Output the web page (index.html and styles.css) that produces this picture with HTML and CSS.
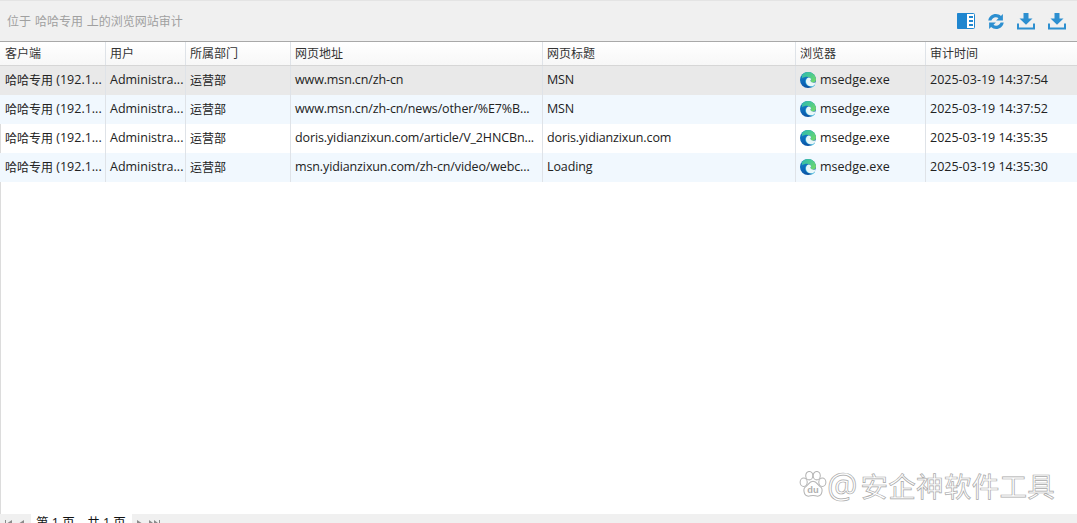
FILE: index.html
```html
<!DOCTYPE html>
<html lang="zh-CN">
<head>
<meta charset="utf-8">
<title>浏览网站审计</title>
<link rel="stylesheet" href="styles.css">
</head>
<body>
<svg class="defs" width="0" height="0" aria-hidden="true">
  <defs>
    <linearGradient id="edgeBlue" x1="0.3" y1="0" x2="0.6" y2="1">
      <stop offset="0" stop-color="#1a86c4"/><stop offset="0.6" stop-color="#0c66b8"/><stop offset="1" stop-color="#0a4f9e"/>
    </linearGradient>
    <linearGradient id="edgeGreen" x1="0" y1="0" x2="1" y2="0.6">
      <stop offset="0" stop-color="#2fb8b0"/><stop offset="0.6" stop-color="#4ccb8e"/><stop offset="1" stop-color="#6cd66e"/>
    </linearGradient>
    <symbol id="edge" viewBox="0 0 16 16">
      <circle cx="8" cy="8" r="8" fill="url(#edgeBlue)"/>
      <path d="M2.300 2.400C3.800.9 5.800 0 8 0c4.400 0 8 3.400 8 7.600 0 1.900-1.500 3.100-3.500 3.100-1.300 0-2.400-.4-2.800-1 .8-.5 1.100-1.200 1.100-2 0-1.700-1.800-3-4-3-1.800 0-3.300.5-4.500 1.500-.4-.9-.4-2.900.0-3.800z" fill="url(#edgeGreen)"/>
      <path d="M6.500 6.600C5 8 4.900 10.300 6 12c1.300 2 3.900 3.100 6.400 2.700-1.100.8-2.700 1.300-4.200 1.300.4 0 5.500 0 7-3.600-1.200 1-2.900 1.300-4.500 1-2.300-.5-4-2-4.200-4.200-.1-1 .1-1.900.5-2.600z" fill="#3db7dc"/>
      <path d="M8.500 5.600c1.500 0 2.500.9 2.500 1.900 0 .6-.3 1-.8 1.300.6 1.300 2.200 2 3.800 1.900 1 0 2-.4 2-.9-.4 2.200-1.700 3.700-3.400 4.400-3.100.5-6.300-1.400-6.600-4.300-.2-1.900.9-4.300 2.500-4.300z" fill="#e9f6f8"/>
    </symbol>
    <symbol id="download" viewBox="0 0 18 18">
      <path d="M6.500 1h5v5.500h4L9 12.700 2.500 6.500h4z" fill="#2d8fd0"/>
      <path d="M1 11.500V16.500H17V11.500" fill="none" stroke="#2d8fd0" stroke-width="2"/>
    </symbol>
  </defs>
</svg>
<div class="app">
  <header class="toolbar">
    <span class="crumb">位于 哈哈专用 上的浏览网站审计</span>
    <div class="tools">
      <svg class="tool" width="18" height="16" viewBox="0 0 18 16" role="img" aria-label="面板">
        <rect x="0.500" y="0.500" width="17" height="15" rx="1" fill="#fff" stroke="#1f86cf"/>
        <rect x="0" y="0" width="10" height="16" rx="1" fill="#1f86cf"/>
        <path d="M12 4h4M12 8h4M12 12h4" stroke="#1f86cf" stroke-width="2"/>
      </svg>
      <svg class="tool" width="16" height="17" viewBox="0 0 16 17" role="img" aria-label="刷新">
        <path d="M.3 7.500C.9 3.500 4.100 1 7.900 1c2 0 3.700.7 5 1.900L14.900.9V7.600H8.100l2.400-2.400c-.7-.6-1.600-.9-2.600-.9-2.200 0-3.900 1.300-4.500 3.200z" fill="#2d8fd0"/>
        <path d="M15.700 9.500C15.100 13.500 11.900 16 8.100 16c-2 0-3.700-.7-5-1.900l-2 2V9.400h6.800l-2.400 2.400c.7.600 1.600.9 2.600.9 2.200 0 3.900-1.300 4.500-3.200z" fill="#2d8fd0"/>
      </svg>
      <svg class="tool" width="18" height="18" role="img" aria-label="下载"><use href="#download"/></svg>
      <svg class="tool" width="18" height="18" role="img" aria-label="导出"><use href="#download"/></svg>
    </div>
  </header>

  <main class="grid">
    <div class="row head">
      <div class="cell">客户端</div><div class="cell">用户</div><div class="cell">所属部门</div><div class="cell">网页地址</div><div class="cell">网页标题</div><div class="cell">浏览器</div><div class="cell">审计时间</div>
    </div>
    <div class="row selected">
      <div class="cell"><span class="zh">哈哈专用</span>&nbsp;(192.1...</div><div class="cell">Administra...</div><div class="cell zh">运营部</div><div class="cell tight">www.msn.cn/zh-cn</div><div class="cell tight">MSN</div>
      <div class="cell"><svg class="edge" width="16" height="16"><use href="#edge"/></svg>msedge.exe</div><div class="cell">2025-03-19 14:37:54</div>
    </div>
    <div class="row alt">
      <div class="cell"><span class="zh">哈哈专用</span>&nbsp;(192.1...</div><div class="cell">Administra...</div><div class="cell zh">运营部</div><div class="cell tight">www.msn.cn/zh-cn/news/other/%E7%B...</div><div class="cell tight">MSN</div>
      <div class="cell"><svg class="edge" width="16" height="16"><use href="#edge"/></svg>msedge.exe</div><div class="cell">2025-03-19 14:37:52</div>
    </div>
    <div class="row">
      <div class="cell"><span class="zh">哈哈专用</span>&nbsp;(192.1...</div><div class="cell">Administra...</div><div class="cell zh">运营部</div><div class="cell tight">doris.yidianzixun.com/article/V_2HNCBn...</div><div class="cell tight">doris.yidianzixun.com</div>
      <div class="cell"><svg class="edge" width="16" height="16"><use href="#edge"/></svg>msedge.exe</div><div class="cell">2025-03-19 14:35:35</div>
    </div>
    <div class="row alt">
      <div class="cell"><span class="zh">哈哈专用</span>&nbsp;(192.1...</div><div class="cell">Administra...</div><div class="cell zh">运营部</div><div class="cell tight">msn.yidianzixun.com/zh-cn/video/webc...</div><div class="cell tight">Loading</div>
      <div class="cell"><svg class="edge" width="16" height="16"><use href="#edge"/></svg>msedge.exe</div><div class="cell">2025-03-19 14:35:30</div>
    </div>
  </main>

  <footer class="pager">
    <div class="nav">
      <svg width="26" height="9" viewBox="0 0 26 9" aria-hidden="true"><path d="M2.500 3v6" stroke="#8a8a8a" stroke-width="1"/><path d="M9 3L4.500 6 9 9z" fill="#8a8a8a"/><path d="M21 3l-4.500 3 4.500 3z" fill="#8a8a8a"/></svg>
    </div>
    <div class="page">第 1 页，共 1 页</div>
    <div class="nav">
      <svg width="28" height="9" viewBox="0 0 28 9" aria-hidden="true"><path d="M2 3l4.500 3L2 9z" fill="#8a8a8a"/><path d="M14 3l4 3-4 3zM19 3l4 3-4 3z" fill="#8a8a8a"/><path d="M24.500 3v6" stroke="#8a8a8a"/></svg>
    </div>
  </footer>
</div>

<div class="watermark">
  <svg width="28" height="28" viewBox="0 0 30 30" aria-hidden="true">
    <g fill="#fff" stroke="#b4b4b4" stroke-width="1.100">
      <ellipse cx="5" cy="12" rx="3.800" ry="4.500"/>
      <ellipse cx="11" cy="5" rx="3.800" ry="4.500"/>
      <ellipse cx="19" cy="5" rx="3.800" ry="4.500"/>
      <ellipse cx="25" cy="12" rx="3.800" ry="4.500"/>
      <path d="M15 11c4 0 5 4 8 6 3 2 2 10-3 10-2 0-3-.7-5-.7s-3 .7-5 .7c-5 0-6-8-3-10 3-2 4-6 8-6z"/>
    </g>
    <text x="15" y="24" class="du">du</text>
  </svg>
  <span class="mark-at">@</span><span class="mark-text">安企神软件工具</span>
</div>
</body>
</html>
```
FILE: styles.css
```css
* { box-sizing: border-box; }
html, body { margin: 0; height: 523px; overflow: hidden; background: #fff; }
body {
  position: relative;
  font-family: "Open Sans", "Noto Sans CJK SC", sans-serif;
  font-size: 12.5px;
  color: #222;
}
.defs { position: absolute; }
.app { display: flex; flex-direction: column; height: 523px; border-left: 1px solid #dcdcdc; }

.toolbar {
  flex: none;
  height: 42px;
  display: flex;
  align-items: center;
  justify-content: space-between;
  padding: 0 11px 0 7px;
  background: #f0f0f0;
  border-top: 1px solid #e4e4e4;
  border-bottom: 1px solid #a8a8a8;
  margin-left: -1px;
}
.crumb { color: #a0a0a0; font-size: 12px; word-spacing: 0.8px; }
.tools { display: flex; align-items: center; gap: 13px; }
.tool { display: block; }

.grid { flex: 1; min-height: 0; margin-left: -1px; }
.row {
  display: grid;
  grid-template-columns: 106px 80px 105px 252px 253px 130px 1fr;
  height: 29px;
}
.head {
  height: 24px;
  background: linear-gradient(#fff, #f7f7f7);
  border-bottom: 1px solid #d6d6d6;
  font-size: 12px;
  color: #333;
}
.cell {
  display: flex;
  align-items: center;
  padding: 0 0 2px 4px;
  border-right: 1px solid #dfe3e8;
  white-space: pre;
  overflow: hidden;
  min-width: 0;
}
.cell:first-child { padding-left: 5px; }
.cell:last-child { border-right: 0; }
.tight { letter-spacing: -0.12px; }
.zh { font-size: 12px; }
.selected { background: #e9e9e9; }
.alt { background: #f1f8fe; }
.edge { flex: none; margin-right: 4px; }

.pager {
  flex: none;
  height: 9px;
  display: flex;
  background: #f0f0f0;
  margin-left: -1px;
  overflow: hidden;
  color: #111;
}
.nav { width: 31px; display: flex; align-items: flex-start; padding: 3px 0 0 3px; }
.page {
  width: 101px;
  background: #fff;
  padding: 2px 0 0 5px;
  font-size: 12.5px;
  line-height: 13px;
  white-space: nowrap;
}

.watermark {
  position: absolute;
  left: 799px;
  top: 471px;
  display: flex;
  align-items: center;
}
.mark-at, .mark-text {
  font-family: "Noto Sans CJK SC", sans-serif;
  line-height: 28px;
  color: #fff;
  -webkit-text-stroke: 0.7px #a8a8a8;
  white-space: nowrap;
}
.mark-at { font-size: 34px; font-family: "Open Sans", sans-serif; margin: 0 3px 0 0; }
.mark-text { font-size: 27.5px; letter-spacing: 0.3px; }
.du {
  font-family: "Liberation Sans", sans-serif;
  font-size: 10px;
  font-weight: 700;
  fill: #b0b0b0;
  text-anchor: middle;
}
```
